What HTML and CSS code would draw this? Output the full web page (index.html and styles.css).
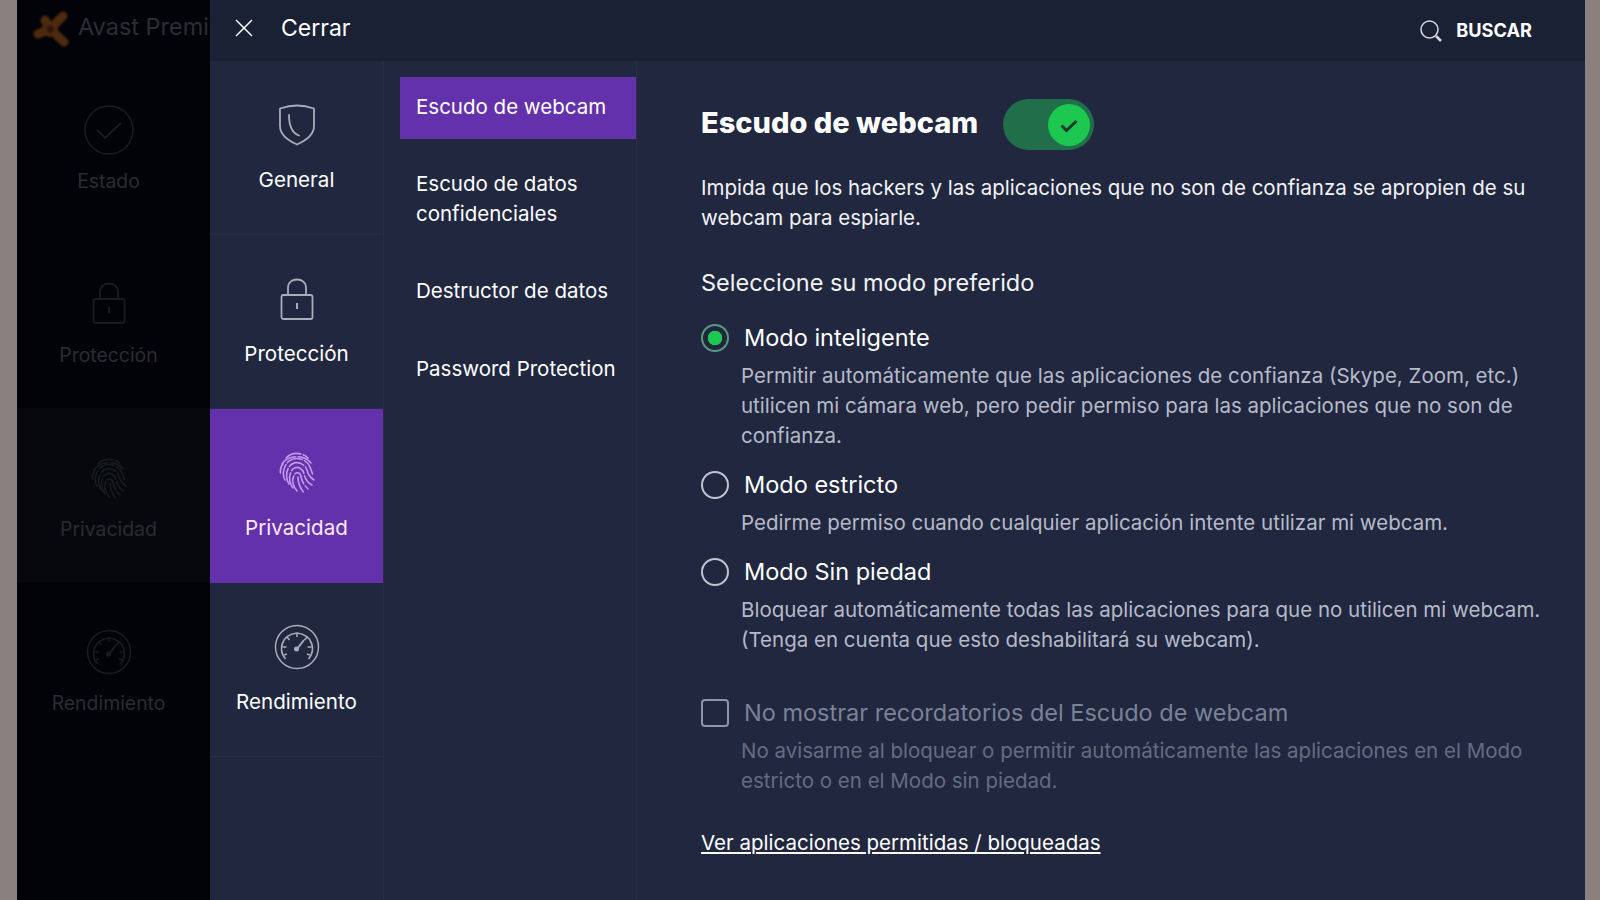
FILE: index.html
```html
<!DOCTYPE html>
<html>
  <head>
    <meta charset="utf-8">
    <link rel="stylesheet" href="styles.css">
  </head>
  <body>
    <svg class="defs" width="0" height="0">
      <symbol id="i-check-circle" viewBox="0 0 50 50">
        <circle cx="25" cy="25" r="24" fill="none" stroke="currentColor" stroke-width="1.5"/>
        <path d="M13 25l8 8 16-15" fill="none" stroke="currentColor" stroke-width="1.8"/>
      </symbol>
      <symbol id="i-shield" viewBox="0 0 38 42">
        <path d="M2 4.500C8 2.500 13 1.500 19 1.500S30 2.500 36 4.500V22C36 30 28 36.500 19 40.500 10 36.500 2 30 2 22Z" fill="none" stroke="currentColor" stroke-width="1.8" stroke-linejoin="round"/>
        <path d="M11 11c0 12 3 18 10 20.500" fill="none" stroke="currentColor" stroke-width="1.8" stroke-linecap="round"/>
      </symbol>
      <symbol id="i-lock" viewBox="0 0 34 42">
        <path d="M8 17V10C8 4.500 12 1.500 17 1.500S26 4.500 26 10V17" fill="none" stroke="currentColor" stroke-width="1.8"/>
        <rect x="1.500" y="17" width="31" height="24" rx="2" fill="none" stroke="currentColor" stroke-width="1.8"/>
        <path d="M17 25v6" stroke="currentColor" stroke-width="2"/>
      </symbol>
      <symbol id="i-finger" viewBox="0 0 36 42">
        <g fill="none" stroke="currentColor" stroke-width="1.600" stroke-linecap="round" stroke-dasharray="16 2.500">
          <path d="M7 6C13 0 23 0 29 6"/>
          <path d="M3 12C8 4 24 1 32 11"/>
          <path d="M1.500 21C1 17 2 14 4 12"/>
          <path d="M6 28C3 24 4 14 10 9 17 4 28 7 31 15 32 18 33 20 34 23"/>
          <path d="M10 32C6 26 7 16 13 12 19 9 26 12 28 18 29 23 32 26 35 28"/>
          <path d="M14 36C10 31 9 22 14 17 19 13 24 17 25 22 26 27 29 31 33 33"/>
          <path d="M18 39C14 34 12 27 16 22 19 19 22 22 22 25 23 30 26 34 29 37"/>
          <path d="M19 25C19 31 21 36 25 41"/>
        </g>
      </symbol>
      <symbol id="i-gauge" viewBox="0 0 46 46">
        <g fill="none" stroke="currentColor" stroke-width="1.500">
          <circle cx="23" cy="23" r="21.500"/>
          <path d="M11.500 35C4 26 7 11 23 9 39 11 42 26 34.500 35" stroke-width="1.700"/>
          <path d="M23 9v4M13 13l2.500 3M33 13l-2.500 3M8.500 23h4M37.500 23h-4M10 31l3-1M36 31l-3-1"/>
          <path d="M23 25l7-9" stroke-width="2"/>
        </g>
        <circle cx="22.500" cy="25" r="2.500" fill="currentColor"/>
      </symbol>
    </svg>

    <div class="gutter"></div>

    <aside class="main-side">
      <div class="brand">
        <svg class="brand-logo" viewBox="0 0 40 40">
          <path d="M19 21L32 8M19 21L33 34M19 21L7 26M19 21L14 12" fill="none" stroke="#4e2a0e" stroke-width="9" stroke-linecap="round"/>
          <circle cx="19" cy="21" r="8" fill="#4e2a0e"/>
          <circle cx="19" cy="21" r="3.500" fill="#2a190c"/>
        </svg>
        <span class="brand-name">Avast Premi</span>
      </div>
      <div class="side-item">
        <svg class="side-icon"><use href="#i-check-circle"/></svg>
        <span>Estado</span>
      </div>
      <div class="side-item">
        <svg class="side-icon side-lock"><use href="#i-lock"/></svg>
        <span>Protección</span>
      </div>
      <div class="side-item side-item-on">
        <svg class="side-icon side-finger"><use href="#i-finger"/></svg>
        <span>Privacidad</span>
      </div>
      <div class="side-item">
        <svg class="side-icon side-gauge"><use href="#i-gauge"/></svg>
        <span>Rendimiento</span>
      </div>
    </aside>

    <main class="settings">
      <header class="topbar">
        <svg class="close-icon" viewBox="0 0 18 18">
          <path d="M1 1l16 16M17 1L1 17" stroke="#fff" stroke-width="1.500"/>
        </svg>
        <span class="close-text">Cerrar</span>
        <div class="search">
          <svg class="search-icon" viewBox="0 0 24 24">
            <circle cx="10.500" cy="10.500" r="8.500" fill="none" stroke="#d5d8e0" stroke-width="1.500"/>
            <path d="M17 17l5 5" stroke="#d5d8e0" stroke-width="2.500"/>
          </svg>
          <span>BUSCAR</span>
        </div>
      </header>

      <div class="settings-body">
        <nav class="tabs">
          <a class="tab">
            <svg class="tab-icon icon-shield"><use href="#i-shield"/></svg>
            <span>General</span>
          </a>
          <a class="tab">
            <svg class="tab-icon icon-lock"><use href="#i-lock"/></svg>
            <span>Protección</span>
          </a>
          <a class="tab tab-active">
            <svg class="tab-icon icon-finger"><use href="#i-finger"/></svg>
            <span>Privacidad</span>
          </a>
          <a class="tab">
            <svg class="tab-icon icon-gauge"><use href="#i-gauge"/></svg>
            <span>Rendimiento</span>
          </a>
        </nav>

        <nav class="submenu">
          <a class="sub-item sub-active">Escudo de webcam</a>
          <a class="sub-item">Escudo de datos confidenciales</a>
          <a class="sub-item">Destructor de datos</a>
          <a class="sub-item">Password Protection</a>
        </nav>

        <section class="content">
          <div class="title-row">
            <h1>Escudo de webcam</h1>
            <div class="toggle">
              <div class="knob">
                <svg viewBox="0 0 20 20" width="20" height="20">
                  <path d="M2.500 10.500l5 5 10-9.500" fill="none" stroke="#17392f" stroke-width="3"/>
                </svg>
              </div>
            </div>
          </div>
          <p class="intro">Impida que los hackers y las aplicaciones que no son de confianza se apropien de su webcam para espiarle.</p>
          <h2>Seleccione su modo preferido</h2>

          <div class="option">
            <span class="radio radio-on"></span>
            <span class="opt-label">Modo inteligente</span>
          </div>
          <p class="opt-desc">Permitir automáticamente que las aplicaciones de confianza (Skype, Zoom, etc.) utilicen mi cámara web, pero pedir permiso para las aplicaciones que no son de confianza.</p>

          <div class="option">
            <span class="radio"></span>
            <span class="opt-label">Modo estricto</span>
          </div>
          <p class="opt-desc">Pedirme permiso cuando cualquier aplicación intente utilizar mi webcam.</p>

          <div class="option">
            <span class="radio"></span>
            <span class="opt-label">Modo Sin piedad</span>
          </div>
          <p class="opt-desc">Bloquear automáticamente todas las aplicaciones para que no utilicen mi webcam. (Tenga en cuenta que esto deshabilitará su webcam).</p>

          <div class="option option-check">
            <span class="checkbox"></span>
            <span class="opt-label dim">No mostrar recordatorios del Escudo de webcam</span>
          </div>
          <p class="opt-desc dim-desc">No avisarme al bloquear o permitir automáticamente las aplicaciones en el Modo estricto o en el Modo sin piedad.</p>

          <a class="link">Ver aplicaciones permitidas / bloqueadas</a>
        </section>
      </div>
    </main>

    <div class="gutter gutter-right"></div>
  </body>
</html>
```

FILE: styles.css
```css
* {
  box-sizing: border-box;
  margin: 0;
  padding: 0;
}

body {
  display: flex;
  height: 900px;
  overflow: hidden;
  font-family: "Inter", sans-serif;
  background: #8a807e;
  color: #fff;
}

.defs {
  position: absolute;
}

.gutter {
  width: 17px;
  flex: none;
  background: #8a807e;
}

.gutter-right {
  width: 15px;
}

/* dimmed app behind the panel */
.main-side {
  width: 193px;
  flex: none;
  background: #020308;
  color: #2a2c31;
}

.brand {
  height: 60px;
  display: flex;
  align-items: center;
  gap: 7px;
  padding-left: 14px;
  overflow: hidden;
  white-space: nowrap;
}

.brand-logo {
  width: 40px;
  height: 40px;
  flex: none;
  margin-top: -4px;
  filter: blur(1px);
}

.brand-name {
  font-size: 23.500px;
  margin-top: -7px;
  color: #2b2d33;
}

.side-item {
  height: 174px;
  display: flex;
  flex-direction: column;
  align-items: center;
  padding-right: 10px;
  font-size: 19.400px;
}

.side-item-on {
  background: #07080d;
}

.side-icon {
  width: 50px;
  height: 50px;
  margin-top: 45px;
  margin-bottom: 14px;
  color: #181c20;
}

.side-lock {
  height: 42px;
  margin-top: 48px;
  margin-bottom: 19px;
}

.side-finger {
  height: 42px;
  margin-top: 50px;
  margin-bottom: 17px;
}

.side-gauge {
  height: 46px;
  margin-top: 47px;
  margin-bottom: 16px;
}

.settings {
  flex: 1;
  display: flex;
  flex-direction: column;
  background: #20273f;
}

.topbar {
  height: 61px;
  flex: none;
  display: flex;
  align-items: center;
  padding: 0 53px 6px 25px;
  background: #1b2135;
}

.close-icon {
  width: 18px;
  height: 18px;
}

.close-text {
  margin-left: 28px;
  font-size: 23px;
}

.search {
  margin-left: auto;
  margin-top: 4px;
  display: flex;
  align-items: center;
  gap: 13px;
  font-size: 18.200px;
  font-weight: 700;
}

.search-icon {
  width: 24px;
  height: 24px;
  margin-top: 3px;
}

.settings-body {
  flex: 1;
  display: flex;
  min-height: 0;
}

.tabs {
  width: 174px;
  flex: none;
  border-right: 1px solid #262d44;
}

.tab {
  height: 174px;
  display: flex;
  flex-direction: column;
  align-items: center;
  font-size: 20.600px;
  border-bottom: 1px solid #262d44;
}

.tab-active {
  background: #6331ab;
  border-bottom: 0;
  color: #fbeaff;
}

.tab-icon {
  color: #a9adb8;
}

.tab-active .tab-icon {
  color: #c79af0;
}

.icon-shield {
  width: 38px;
  height: 42px;
  margin-top: 43px;
  margin-bottom: 21px;
}

.icon-lock {
  width: 34px;
  height: 42px;
  margin-top: 43px;
  margin-bottom: 21px;
}

.icon-finger {
  width: 36px;
  height: 42px;
  margin-top: 43px;
  margin-bottom: 21px;
}

.icon-gauge {
  width: 46px;
  height: 46px;
  margin-top: 41px;
  margin-bottom: 19px;
}

.submenu {
  width: 253px;
  flex: none;
  padding: 16px 0 0 16px;
  border-right: 1px solid #262d44;
}

.sub-item {
  display: block;
  padding: 14px 16px 17px;
  margin-bottom: 16.500px;
  font-size: 20.500px;
  line-height: 30px;
}

.sub-active {
  padding-top: 15px;
  margin-bottom: 15.500px;
  background: #6331ab;
}

.content {
  flex: 1;
  padding: 38px 30px 0 64px;
}

.title-row {
  display: flex;
  align-items: center;
  gap: 25px;
  height: 51px;
}

h1 {
  font-size: 29px;
  font-weight: 800;
  margin-top: -5px;
}

.toggle {
  width: 91px;
  height: 51px;
  padding: 4.500px 4px 4.500px 45px;
  border-radius: 26px;
  background: #206e4a;
}

.knob {
  width: 42px;
  height: 42px;
  border-radius: 50%;
  background: #1cc850;
  display: flex;
  align-items: center;
  justify-content: center;
}

.intro {
  margin-top: 23px;
  font-size: 20.500px;
  line-height: 30px;
  color: #f2f3f6;
}

h2 {
  margin-top: 35px;
  font-size: 23.500px;
  line-height: 30px;
  font-weight: 400;
  color: #f2f3f6;
}

.option {
  display: flex;
  align-items: center;
  gap: 15px;
  height: 30px;
  margin-top: 25px;
  font-size: 23.500px;
}

.opt-label {
  margin-top: -2px;
}

.radio {
  width: 28px;
  height: 28px;
  flex: none;
  border: 2px solid #c0c4cc;
  border-radius: 50%;
}

.radio-on {
  border-color: #5a9a80;
  background: radial-gradient(circle, #1cc850 0 7px, transparent 7.500px);
}

.opt-desc {
  margin-top: 8px;
  margin-left: 40px;
  font-size: 20.500px;
  line-height: 30px;
  color: #b6bac8;
}

.opt-desc + .option {
  margin-top: 19px;
}

.opt-desc + .option-check {
  margin-top: 43px;
}

.checkbox {
  width: 28px;
  height: 28px;
  flex: none;
  border: 2px solid #8f95a6;
  border-radius: 4px;
}

.dim {
  color: #7c8296;
}

.dim-desc {
  margin-top: 8px;
  color: #666c80;
}

.link {
  display: block;
  margin-top: 32px;
  font-size: 20.500px;
  line-height: 30px;
  text-decoration: underline;
}
```
